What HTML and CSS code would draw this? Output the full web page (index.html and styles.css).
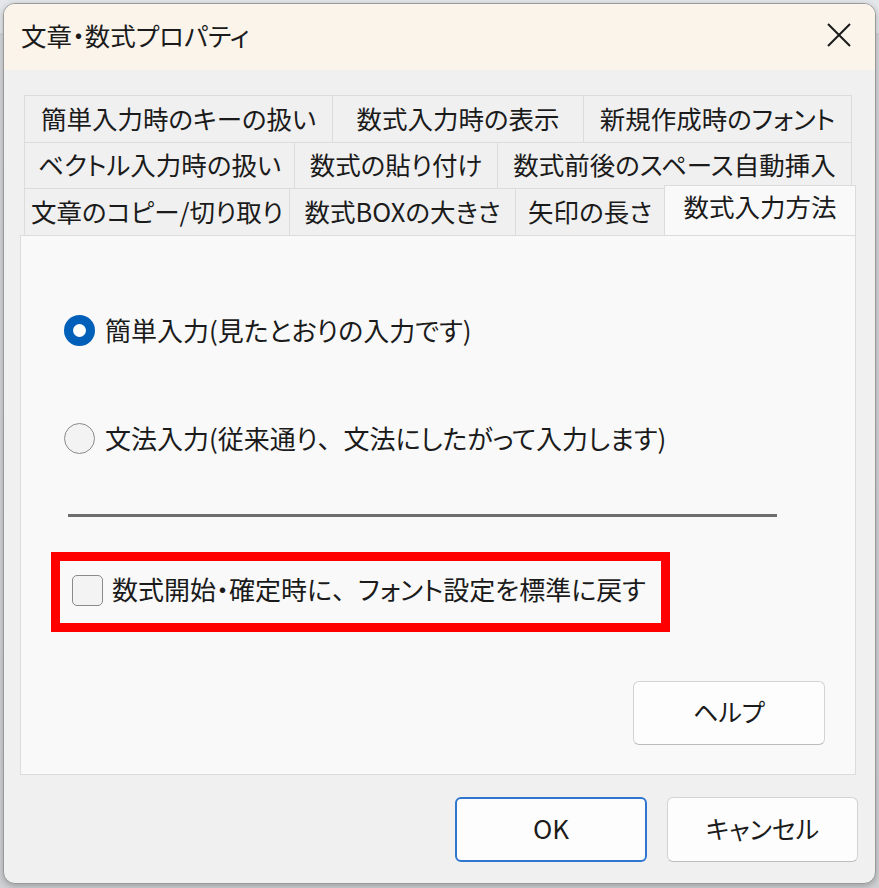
FILE: index.html
```html
<!DOCTYPE html>
<html lang="ja">
<head>
<meta charset="utf-8">
<title>文章・数式プロパティ</title>
<link rel="stylesheet" href="styles.css">
</head>
<body>
<div class="window">
  <div class="titlebar">
    <span class="title">文章・数式プロパティ</span>
    <svg class="close" width="26" height="26" viewBox="0 0 26 26"><path d="M2 2 L24 24 M24 2 L2 24" stroke="#1a1a1a" stroke-width="2" fill="none"/></svg>
  </div>
  <div class="content">
    <div class="tabs">
      <div class="row row1">
        <div class="tab">簡単入力時のキーの扱い</div>
        <div class="tab">数式入力時の表示</div>
        <div class="tab">新規作成時のフォント</div>
      </div>
      <div class="row row2">
        <div class="tab">ベクトル入力時の扱い</div>
        <div class="tab">数式の貼り付け</div>
        <div class="tab">数式前後のスペース自動挿入</div>
      </div>
      <div class="row row3">
        <div class="tab">文章のコピー/切り取り</div>
        <div class="tab">数式BOXの大きさ</div>
        <div class="tab">矢印の長さ</div>
        <div class="tab active">数式入力方法</div>
      </div>
    </div>
    <div class="panel">
      <div class="option first">
        <span class="radio checked"></span>
        <span class="label">簡単入力(見たとおりの入力です)</span>
      </div>
      <div class="option second">
        <span class="radio"></span>
        <span class="label">文法入力(従来通り<span class="fw">、</span>文法にしたがって入力します)</span>
      </div>
      <div class="separator"></div>
      <div class="highlight">
        <span class="checkbox"></span>
        <span class="label">数式開始・確定時に<span class="fw">、</span>フォント設定を標準に戻す</span>
      </div>
      <div class="help-row">
        <button class="btn help">ヘルプ</button>
      </div>
    </div>
    <div class="actions">
      <button class="btn ok">OK</button>
      <button class="btn cancel">キャンセル</button>
    </div>
  </div>
</div>
</body>
</html>
```

FILE: styles.css
```css
* { box-sizing: border-box; }
html, body { margin: 0; padding: 0; }
body {
  width: 879px;
  height: 888px;
  background: linear-gradient(#e3e6ea 0, #e3e6ea 33px, #c9ccd1 34px, #d6d8dc 35px, #cfd1d4 100%);
  padding: 3px 0 0 3px;
  font-family: "Noto Sans CJK JP", "Noto Sans", sans-serif;
  font-feature-settings: "palt";
  color: #1b1b1b;
  overflow: hidden;
}
.window {
  width: 873px;
  height: 881px;
  border: 1px solid #9a9a9a;
  border-radius: 12px;
  overflow: hidden;
  background: #f0f0f0;
  display: flex;
  flex-direction: column;
  box-shadow: 0 2px 6px rgba(0,0,0,0.25);
}
.titlebar {
  height: 66px;
  background: #faf4eb;
  display: flex;
  align-items: center;
  justify-content: space-between;
  padding: 0 23px 4px 17px;
  flex: none;
}
.title {
  font-size: 25.5px;
  line-height: 1;
}
.close { display: block; }
.content {
  flex: 1;
  padding: 25px 19px 0 16px;
  display: flex;
  flex-direction: column;
}
.tabs {
  margin: 0 4px 0 4px;
}
.row {
  display: grid;
  font-size: 25.5px;
}
.row1 { grid-template-columns: 308px 251px 269px; height: 47px; }
.row2 { grid-template-columns: 270px 203px 355px; height: 46px; }
.row3 { grid-template-columns: 265px 226px 149px 188px; height: 47px; }
.tab {
  display: flex;
  align-items: center;
  justify-content: center;
  border: 1px solid #dcdcdc;
  border-right: none;
  border-bottom: none;
  background: #f0f0f0;
  white-space: nowrap;
  line-height: 1;
  padding-bottom: 3px;
}
.tab:last-child { border-right: 1px solid #dcdcdc; }
.tab.active {
  background: #f9f9f9;
  margin: -3px -4px 0 0;
  position: relative;
  z-index: 1;
  border-right: 1px solid #dcdcdc;
  padding-bottom: 9px;
}
.panel {
  height: 540px;
  background: #f9f9f9;
  border: 1px solid #dcdcdc;
  padding: 79px 0 0 0;
  display: flex;
  flex-direction: column;
}
.option {
  display: flex;
  align-items: center;
  height: 31px;
  margin-left: 43px;
  font-size: 26px;
  line-height: 1;
}
.option.second { margin-top: 77px; }
.label { white-space: nowrap; padding-bottom: 2px; }
.fw { font-feature-settings: normal; }
.radio {
  width: 31px;
  height: 31px;
  border-radius: 50%;
  border: 1.5px solid #8a8a8a;
  background: #f3f3f3;
  margin-right: 10px;
  flex: none;
  display: flex;
  align-items: center;
  justify-content: center;
}
.radio.checked {
  border: none;
  background: #005fb8;
}
.radio.checked::after {
  content: "";
  width: 13px;
  height: 13px;
  border-radius: 50%;
  background: #ffffff;
}
.separator {
  height: 3px;
  background: #6e6e6e;
  margin: 60px 0 0 47px;
  width: 709px;
}
.highlight {
  margin: 35px 0 0 30px;
  width: 619px;
  height: 80px;
  border: 9px solid #ff0000;
  display: flex;
  align-items: center;
  padding: 0 0 4px 12px;
  font-size: 26px;
  line-height: 1;
}
.checkbox {
  width: 31px;
  height: 31px;
  border: 1.5px solid #8a8a8a;
  border-radius: 5px;
  background: #f3f3f3;
  margin-right: 9px;
  flex: none;
}
.help-row {
  display: flex;
  justify-content: flex-end;
  margin: 49px 30px 0 0;
}
.btn {
  font-family: "Noto Sans CJK JP", "Noto Sans", sans-serif;
  font-feature-settings: "palt";
  font-size: 25px;
  color: #1b1b1b;
  background: #fdfdfd;
  border: 1px solid #d3d3d3;
  border-bottom-color: #bdbdbd;
  border-radius: 6px;
  padding: 0 0 3px 0;
  line-height: 1;
}
.help { width: 192px; height: 64px; }
.actions {
  display: flex;
  justify-content: flex-end;
  gap: 20px;
  margin-top: 22px;
  margin-right: -2px;
}
.ok {
  width: 192px;
  height: 65px;
  border: 2px solid #2f76cf;
  font-size: 26px;
}
.cancel { width: 191px; height: 65px; }
```
